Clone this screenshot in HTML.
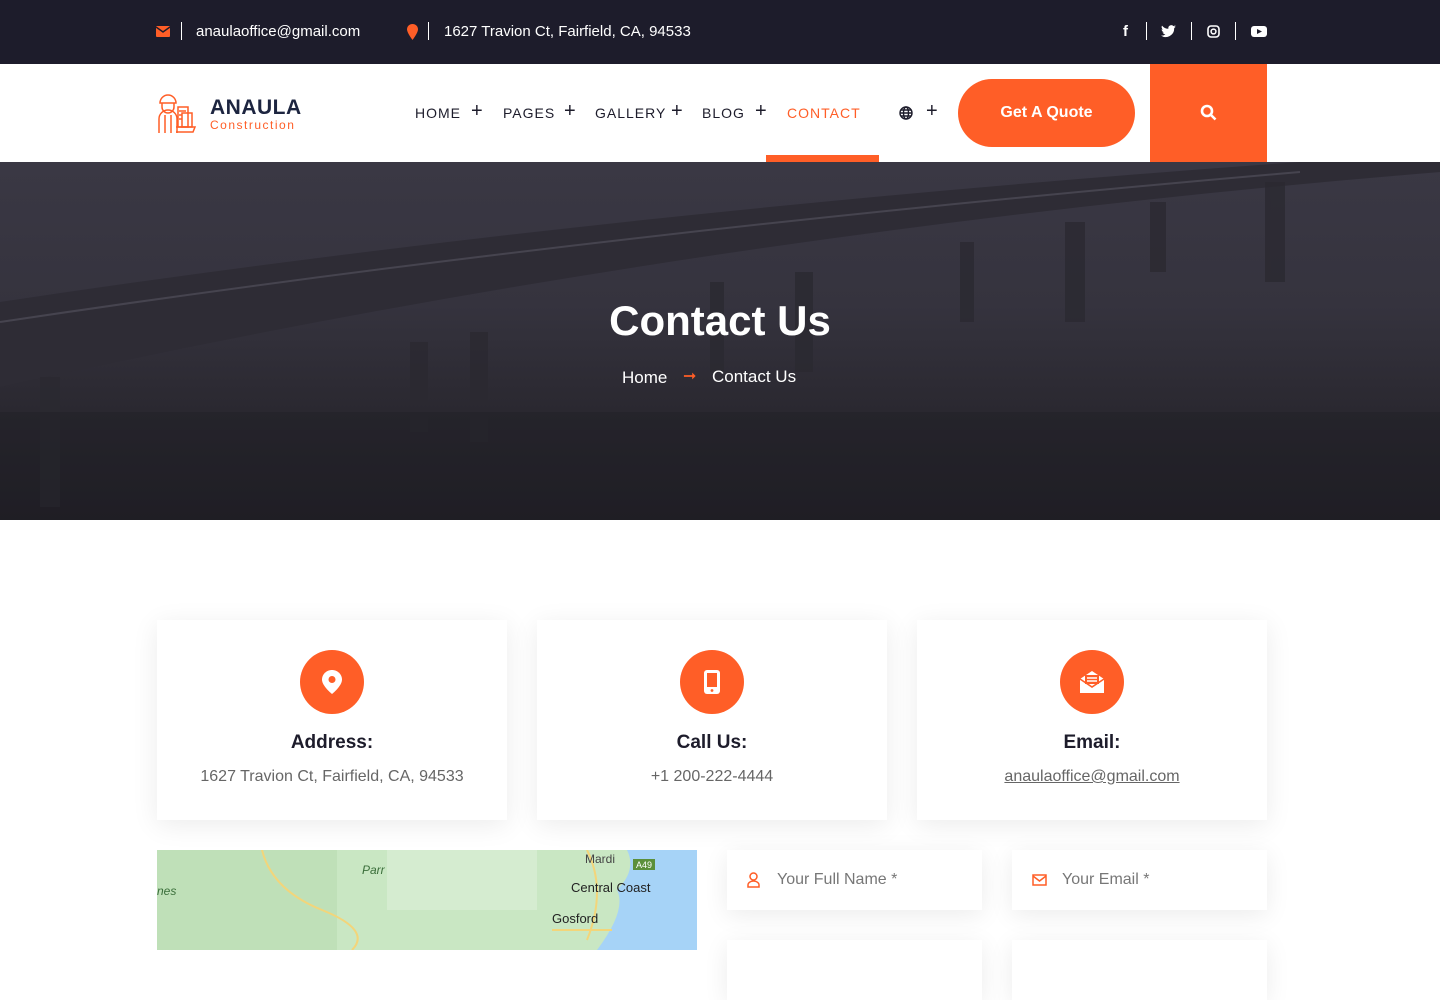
<!DOCTYPE html>
<html><head><meta charset="utf-8"><style>
*{margin:0;padding:0;box-sizing:border-box}
body{width:1440px;height:950px;overflow:hidden;font-family:"Liberation Sans",sans-serif;background:#fff;position:relative}
.top{height:64px;background:#1d1c2b;color:#fff;font-size:15px;position:relative}
.top span{position:absolute;top:23px}
.sep{position:absolute;top:22px;width:1px;height:18px;background:#fff}
.hdr{height:98px;position:relative;background:#fff}
.nav{position:absolute;top:105px;font-size:14px;letter-spacing:1px;color:#1d1c2b}
.o{color:#ff5e27}
.hero{position:absolute;top:162px;left:0;width:1440px;height:358px;background:linear-gradient(180deg,#3a3844 0%,#35333e 40%,#2a2830 70%,#211f26 100%);overflow:hidden}
.card{position:absolute;top:620px;width:350px;height:200px;background:#fff;box-shadow:0 5px 25px rgba(0,0,0,.08);text-align:center}
.circ{width:64px;height:64px;border-radius:50%;background:#ff5e27;margin:30px auto 0;display:flex;align-items:center;justify-content:center}
.card h3{font-size:19px;color:#1d1c2b;margin-top:18px}
.card p{font-size:16px;color:#666;margin-top:14px}
.inp{position:absolute;width:255px;height:60px;background:#fff;box-shadow:0 5px 25px rgba(0,0,0,.08);font-size:16px;color:#777;padding:21px 0 0 50px}
</style></head><body>
<div class="top">
<svg style="position:absolute;left:156px;top:26px" width="14" height="11"><rect width="14" height="11" rx="1" fill="#ff5e27"/><path d="M0 1l7 5 7-5" stroke="#1d1c2b" stroke-width="1.5" fill="none"/></svg>
<div class="sep" style="left:181px"></div><span style="left:196px">anaulaoffice@gmail.com</span>
<svg style="position:absolute;left:407px;top:24px" width="11" height="16"><path d="M5.5 0C2.5 0 0 2.3 0 5.3 0 9 5.5 16 5.5 16S11 9 11 5.3C11 2.3 8.5 0 5.5 0z" fill="#ff5e27"/></svg>
<div class="sep" style="left:428px"></div><span style="left:444px">1627 Travion Ct, Fairfield, CA, 94533</span>
<span style="left:1123px;font-weight:bold">f</span><div class="sep" style="left:1146px"></div>
<svg style="position:absolute;left:1161px;top:25px" width="15" height="13"><path d="M15 1.5c-.6.3-1.2.4-1.8.5.6-.4 1.1-1 1.3-1.7-.6.4-1.300.6-2 .8A3 3 0 007.4 3.8 8.6 8.6 0 011 .6a3 3 0 001 4c-.5 0-1-.2-1.4-.4 0 1.5 1 2.7 2.4 3-.4.1-.9.2-1.4.1.4 1.2 1.5 2 2.8 2.1A6 6 0 010 10.6 8.5 8.5 0 0013.2 3.4V3c.7-.4 1.3-1 1.8-1.5z" fill="#fff"/></svg>
<div class="sep" style="left:1191px"></div>
<svg style="position:absolute;left:1207px;top:25px" width="13" height="13"><rect x="1" y="1" width="11" height="11" rx="3" stroke="#fff" stroke-width="1.6" fill="none"/><circle cx="6.5" cy="6.5" r="2.4" stroke="#fff" stroke-width="1.5" fill="none"/></svg>
<div class="sep" style="left:1235px"></div>
<svg style="position:absolute;left:1251px;top:26px" width="16" height="11"><rect width="16" height="11" rx="3" fill="#fff"/><path d="M6 3l5 2.5L6 8z" fill="#1d1c2b"/></svg>
</div>
<div class="hdr">
<svg style="position:absolute;left:156px;top:29px" width="40" height="42" fill="none" stroke="#ff5e27" stroke-width="1.5"><path d="M4 10a8 8 0 0116 0H4zM6 10v4a6 6 0 0012 0v-4M3 40V26a9 9 0 0118 0v14M9 22v18M15 22v18"/><rect x="22" y="14" width="10" height="20"/><rect x="26" y="20" width="10" height="14"/><path d="M20 34h19l-2 5H20M23 18h7M23 22h3M23 26h3"/></svg>
<div style="position:absolute;left:210px;top:32px;font-size:21px;font-weight:bold;color:#1d2540;letter-spacing:.5px">ANAULA</div>
<div style="position:absolute;left:210px;top:54px;font-size:12px;color:#ff5e27;letter-spacing:1.5px">Construction</div>
</div>
<div class="nav" style="left:415px">HOME</div><div class="nav" style="left:471px;top:100px;font-size:20px">+</div>
<div class="nav" style="left:503px">PAGES</div><div class="nav" style="left:564px;top:100px;font-size:20px">+</div>
<div class="nav" style="left:595px">GALLERY</div><div class="nav" style="left:671px;top:100px;font-size:20px">+</div>
<div class="nav" style="left:702px">BLOG</div><div class="nav" style="left:755px;top:100px;font-size:20px">+</div>
<div class="nav o" style="left:787px">CONTACT</div>
<div style="position:absolute;left:766px;top:155px;width:113px;height:7px;background:#ff5e27"></div>
<svg style="position:absolute;left:899px;top:106px" width="14" height="14" fill="none" stroke="#1d1c2b" stroke-width="1.4"><circle cx="7" cy="7" r="6"/><ellipse cx="7" cy="7" rx="2.5" ry="6"/><path d="M1 7h12M2 4h10M2 10h10"/></svg>
<div class="nav" style="left:926px;top:100px;font-size:20px">+</div>
<div style="position:absolute;left:958px;top:79px;width:177px;height:68px;border-radius:34px;background:#ff5e27;color:#fff;font-weight:bold;font-size:16px;text-align:center;line-height:68px">Get A Quote</div>
<div style="position:absolute;left:1150px;top:64px;width:117px;height:98px;background:#ff5e27"></div>
<svg style="position:absolute;left:1200px;top:104px" width="17" height="17" fill="none" stroke="#fff" stroke-width="2.6"><circle cx="7" cy="7" r="5"/><path d="M11 11l4.5 4.5"/></svg>
<div class="hero">
<svg width="1440" height="358" style="position:absolute;left:0;top:0"><path d="M0 140 Q600 50 1300 0 L1440 0 L1440 10 Q700 70 0 225Z" fill="#2e2c35"/><path d="M0 160 Q600 70 1300 10" stroke="#46444f" stroke-width="2" fill="none"/><g fill="#2b2931" opacity=".8"><rect x="40" y="215" width="20" height="130"/><rect x="410" y="180" width="18" height="90"/><rect x="470" y="170" width="18" height="110"/><rect x="710" y="120" width="14" height="90"/><rect x="795" y="110" width="18" height="100"/><rect x="960" y="80" width="14" height="80"/><rect x="1065" y="60" width="20" height="100"/><rect x="1150" y="40" width="16" height="70"/><rect x="1265" y="20" width="20" height="100"/></g><rect x="0" y="250" width="1440" height="108" fill="#1e1c22" opacity=".35"/></svg>
<div style="position:absolute;left:0;width:1440px;top:135px;text-align:center;color:#fff;font-size:42px;font-weight:bold">Contact Us</div>
<div style="position:absolute;left:622px;top:206px;color:#fff;font-size:17px">Home</div>
<div style="position:absolute;left:683px;top:204px;color:#ff5e27;font-size:16px">➞</div>
<div style="position:absolute;left:712px;top:205px;color:#fff;font-size:17px">Contact Us</div>
</div>
<div class="card" style="left:157px"><div class="circ"><svg width="20" height="24"><path d="M10 0C4.5 0 0 4.3 0 9.6 0 16 10 24 10 24s10-8 10-14.4C20 4.3 15.5 0 10 0z" fill="#fff"/><circle cx="10" cy="9.5" r="3.5" fill="#ff5e27"/></svg></div><h3>Address:</h3><p>1627 Travion Ct, Fairfield, CA, 94533</p></div>
<div class="card" style="left:537px"><div class="circ"><svg width="16" height="24"><rect width="16" height="24" rx="3" fill="#fff"/><rect x="3" y="3" width="10" height="14" fill="#ff5e27"/><circle cx="8" cy="20.5" r="1.4" fill="#ff5e27"/></svg></div><h3>Call Us:</h3><p>+1 200-222-4444</p></div>
<div class="card" style="left:917px"><div class="circ"><svg width="26" height="24"><path d="M1 9l12-8 12 8v14H1z" fill="#fff"/><rect x="6" y="5" width="14" height="9" fill="#ff5e27"/><path d="M8 8h10M8 11h10" stroke="#fff" stroke-width="1.5"/><path d="M1 9l12 8 12-8" stroke="#ff5e27" stroke-width="1.6" fill="none"/></svg></div><h3>Email:</h3><p style="text-decoration:underline">anaulaoffice@gmail.com</p></div>
<div style="position:absolute;left:157px;top:850px;width:540px;height:100px;background:#c9e7c3;overflow:hidden">
<svg width="540" height="100"><path d="M0 0h180v100H0z" fill="#bfe0b8"/><path d="M230 0h150v60H230z" fill="#d5ecd0"/><path d="M470 0h70v100h-100q30-40 20-60 20-20 10-40z" fill="#a6d3f7"/><path d="M105 0q10 40 60 60t30 40M430 0q20 40 0 90M395 80h60" stroke="#f3d57a" stroke-width="2" fill="none"/><text x="205" y="24" font-size="12" fill="#3a6e3a" font-style="italic" font-family="Liberation Sans">Parr</text><text x="0" y="45" font-size="12" fill="#3a6e3a" font-style="italic" font-family="Liberation Sans">nes</text><text x="428" y="13" font-size="12" fill="#444" font-family="Liberation Sans">Mardi</text><text x="414" y="42" font-size="13" fill="#222" font-family="Liberation Sans">Central Coast</text><text x="395" y="73" font-size="13" fill="#222" font-family="Liberation Sans">Gosford</text><rect x="476" y="9" width="22" height="11" fill="#5b8f3b"/><text x="479" y="18" font-size="9" fill="#fff" font-family="Liberation Sans">A49</text></svg></div>
<div class="inp" style="left:727px;top:850px"><svg style="position:absolute;left:20px;top:22px" width="13" height="16" fill="none" stroke="#ff5e27" stroke-width="1.5"><circle cx="6.5" cy="4.5" r="3.5"/><path d="M1 15v-2a5.5 4 0 0111 0v2z"/></svg>Your Full Name *</div>
<div class="inp" style="left:1012px;top:850px"><svg style="position:absolute;left:20px;top:24px" width="15" height="12" fill="none" stroke="#ff5e27" stroke-width="1.5"><rect x="1" y="1" width="13" height="10"/><path d="M1 2l6.5 5 6.5-5"/></svg>Your Email *</div>
<div class="inp" style="left:727px;top:940px"></div><div class="inp" style="left:1012px;top:940px"></div>
</body></html>
